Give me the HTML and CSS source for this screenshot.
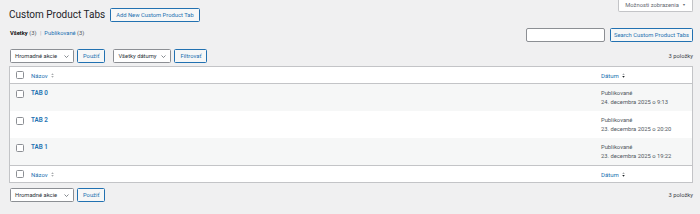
FILE: index.html
```html
<!DOCTYPE html>
<html lang="sk">
<head>
<meta charset="utf-8">
<title>Custom Product Tabs</title>
<link rel="stylesheet" href="styles.css">
</head>
<body>
<div class="screen-meta-links">
  <button class="screen-options">Možnosti zobrazenia <span class="tri">▼</span></button>
</div>
<div class="wrap">
  <div class="heading">
    <h1>Custom Product Tabs</h1>
    <a class="page-title-action" href="#">Add New Custom Product Tab</a>
  </div>

  <div class="filters-row">
    <ul class="subsubsub">
      <li><a class="current" href="#">Všetky <span class="count">(3)</span></a> <span class="sep">|</span></li>
      <li><a href="#">Publikované <span class="count">(3)</span></a></li>
    </ul>
    <div class="search-box">
      <input class="search-input" type="search">
      <button class="btn btn-search">Search Custom Product Tabs</button>
    </div>
  </div>

  <div class="tablenav top">
    <div class="select sel-bulk">Hromadné akcie <svg class="chev" viewBox="0 0 10 6"><path d="M1 1l4 4 4-4"/></svg></div>
    <button class="btn">Použiť</button>
    <div class="select sel-date">Všetky dátumy <svg class="chev" viewBox="0 0 10 6"><path d="M1 1l4 4 4-4"/></svg></div>
    <button class="btn">Filtrovať</button>
    <span class="num">3 položky</span>
  </div>

  <table class="list">
    <thead>
      <tr>
        <th class="check"><span class="cb"></span></th>
        <th class="title"><a href="#">Názov <svg class="sort" viewBox="0 0 6 10"><path d="M3 0.5L5.5 4H0.5z"/><path d="M3 9.5L5.5 6H0.5z"/></svg></a></th>
        <th class="date"><a href="#">Dátum <svg class="sort" viewBox="0 0 6 10"><path d="M3 0.5L5.5 4H0.5z"/><path class="on" d="M3 9.5L5.5 6H0.5z"/></svg></a></th>
      </tr>
    </thead>
    <tbody>
      <tr class="alt">
        <td class="check"><span class="cb"></span></td>
        <td class="title"><a class="row-title" href="#">TAB 0</a><div class="row-actions">&nbsp;</div></td>
        <td class="date">Publikované<br>24. decembra 2025 o 9:13</td>
      </tr>
      <tr>
        <td class="check"><span class="cb"></span></td>
        <td class="title"><a class="row-title" href="#">TAB 2</a><div class="row-actions">&nbsp;</div></td>
        <td class="date">Publikované<br>23. decembra 2025 o 20:20</td>
      </tr>
      <tr class="alt">
        <td class="check"><span class="cb"></span></td>
        <td class="title"><a class="row-title" href="#">TAB 1</a><div class="row-actions">&nbsp;</div></td>
        <td class="date">Publikované<br>23. decembra 2025 o 19:22</td>
      </tr>
    </tbody>
    <tfoot>
      <tr>
        <th class="check"><span class="cb"></span></th>
        <th class="title"><a href="#">Názov <svg class="sort" viewBox="0 0 6 10"><path d="M3 0.5L5.5 4H0.5z"/><path d="M3 9.5L5.5 6H0.5z"/></svg></a></th>
        <th class="date"><a href="#">Dátum <svg class="sort" viewBox="0 0 6 10"><path d="M3 0.5L5.5 4H0.5z"/><path class="on" d="M3 9.5L5.5 6H0.5z"/></svg></a></th>
      </tr>
    </tfoot>
  </table>

  <div class="tablenav bottom">
    <div class="select sel-bulk">Hromadné akcie <svg class="chev" viewBox="0 0 10 6"><path d="M1 1l4 4 4-4"/></svg></div>
    <button class="btn">Použiť</button>
    <span class="num">3 položky</span>
  </div>
</div>
</body>
</html>
```

FILE: styles.css
```css
html, body {
  margin: 0;
  padding: 0;
  background: #f0f0f1;
}
body {
  font-family: Roboto, "Noto Sans", sans-serif;
  font-size: 5.8px;
  line-height: 1.4;
  color: #3c434a;
}
a {
  color: #2271b1;
  text-decoration: none;
}
.screen-meta-links {
  float: right;
  margin-right: 7px;
}
.screen-options {
  display: block;
  width: 75px;
  height: 12px;
  padding: 0 0 1px 0;
  background: #fff;
  border: 1px solid #c3c4c7;
  border-top: none;
  border-radius: 0 0 2px 2px;
  font-family: inherit;
  font-size: 5.8px;
  color: #646970;
  text-align: center;
}
.screen-options .tri {
  font-size: 3.5px;
  vertical-align: 1px;
  margin-left: 2px;
}
.wrap {
  padding: 8px 7px 0 9px;
}
.heading {
  display: flex;
  align-items: center;
  gap: 5px;
}
h1 {
  margin: 0;
  font-size: 10px;
  font-weight: 400;
  line-height: 14px;
  color: #1d2327;
}
.page-title-action,
.btn {
  display: inline-flex;
  align-items: center;
  box-sizing: border-box;
  height: 14px;
  padding: 0 5px;
  border: 1px solid #2271b1;
  border-radius: 1.5px;
  background: #f6f7f7;
  color: #2271b1;
  font-family: inherit;
  font-size: 5.8px;
  white-space: nowrap;
}
.btn-search {
  padding: 0 3px;
}
.filters-row {
  display: flex;
  justify-content: space-between;
  align-items: flex-start;
  margin-top: 6px;
}
.subsubsub {
  display: flex;
  gap: 3px;
  margin: 0;
  padding: 0 0 0 1px;
  list-style: none;
  line-height: 10px;
  font-size: 5.8px;
}
.subsubsub a.current {
  color: #000;
  font-weight: 600;
}
.subsubsub .count {
  color: #50575e;
  font-weight: 400;
}
.subsubsub .sep {
  color: #a7aaad;
  margin-left: 2px;
}
.search-box {
  display: flex;
  gap: 5px;
}
.search-input {
  box-sizing: border-box;
  width: 79px;
  height: 14px;
  margin: 0;
  padding: 0;
  border: 1px solid #8c8f94;
  border-radius: 2px;
  background: #fff;
}
.tablenav {
  display: flex;
  align-items: center;
  gap: 3px;
  height: 14px;
}
.tablenav.top {
  margin-top: 7px;
  margin-bottom: 3px;
}
.tablenav.bottom {
  margin-top: 5px;
}
.select {
  box-sizing: border-box;
  display: flex;
  align-items: center;
  justify-content: space-between;
  height: 14px;
  padding: 0 4px 0 4px;
  border: 1px solid #8c8f94;
  border-radius: 1.5px;
  background: #fff;
  color: #2c3338;
  margin-left: 1px;
}
.sel-bulk { width: 64px; }
.sel-date { width: 58px; margin-left: 5px; }
.chev {
  width: 5px;
  height: 3px;
  fill: none;
  stroke: #50575e;
  stroke-width: 1.4;
}
.num {
  margin-left: auto;
  color: #3c434a;
}
.list {
  width: 100%;
  border-collapse: collapse;
  border: 1px solid #c3c4c7;
  background: #fff;
  table-layout: fixed;
}
.list th,
.list td {
  text-align: left;
  vertical-align: top;
  font-weight: 400;
}
.list thead th,
.list tfoot th {
  height: 16px;
  padding: 0 5px;
  vertical-align: middle;
  line-height: 9px;
  font-size: 6px;
}
.list thead tr {
  border-bottom: 1px solid #c3c4c7;
}
.list tfoot tr {
  border-top: 1px solid #c3c4c7;
}
.list th.check,
.list td.check {
  width: 10px;
  padding: 0 0 0 6px;
}
.list th.date,
.list td.date {
  width: 86px;
}
.list tbody td {
  padding: 4.5px 5px 3.5px;
  line-height: 9.5px;
  font-size: 5.8px;
}
.list tbody td.check {
  padding: 5.5px 0 0 6px;
}
.list tbody td.date {
  color: #50575e;
}
.list tr.alt {
  background: #f6f7f7;
}
.cb {
  display: block;
  box-sizing: border-box;
  width: 8px;
  height: 8px;
  border: 1px solid #8c8f94;
  border-radius: 1.5px;
  background: #fff;
}
.row-title {
  font-weight: 600;
  font-size: 6.3px;
}
.row-actions {
  height: 9.5px;
}
.sort {
  width: 3px;
  height: 5px;
  margin-left: 2px;
  vertical-align: -0.5px;
  fill: #a7aaad;
}
.sort .on {
  fill: #1d2327;
}
```
